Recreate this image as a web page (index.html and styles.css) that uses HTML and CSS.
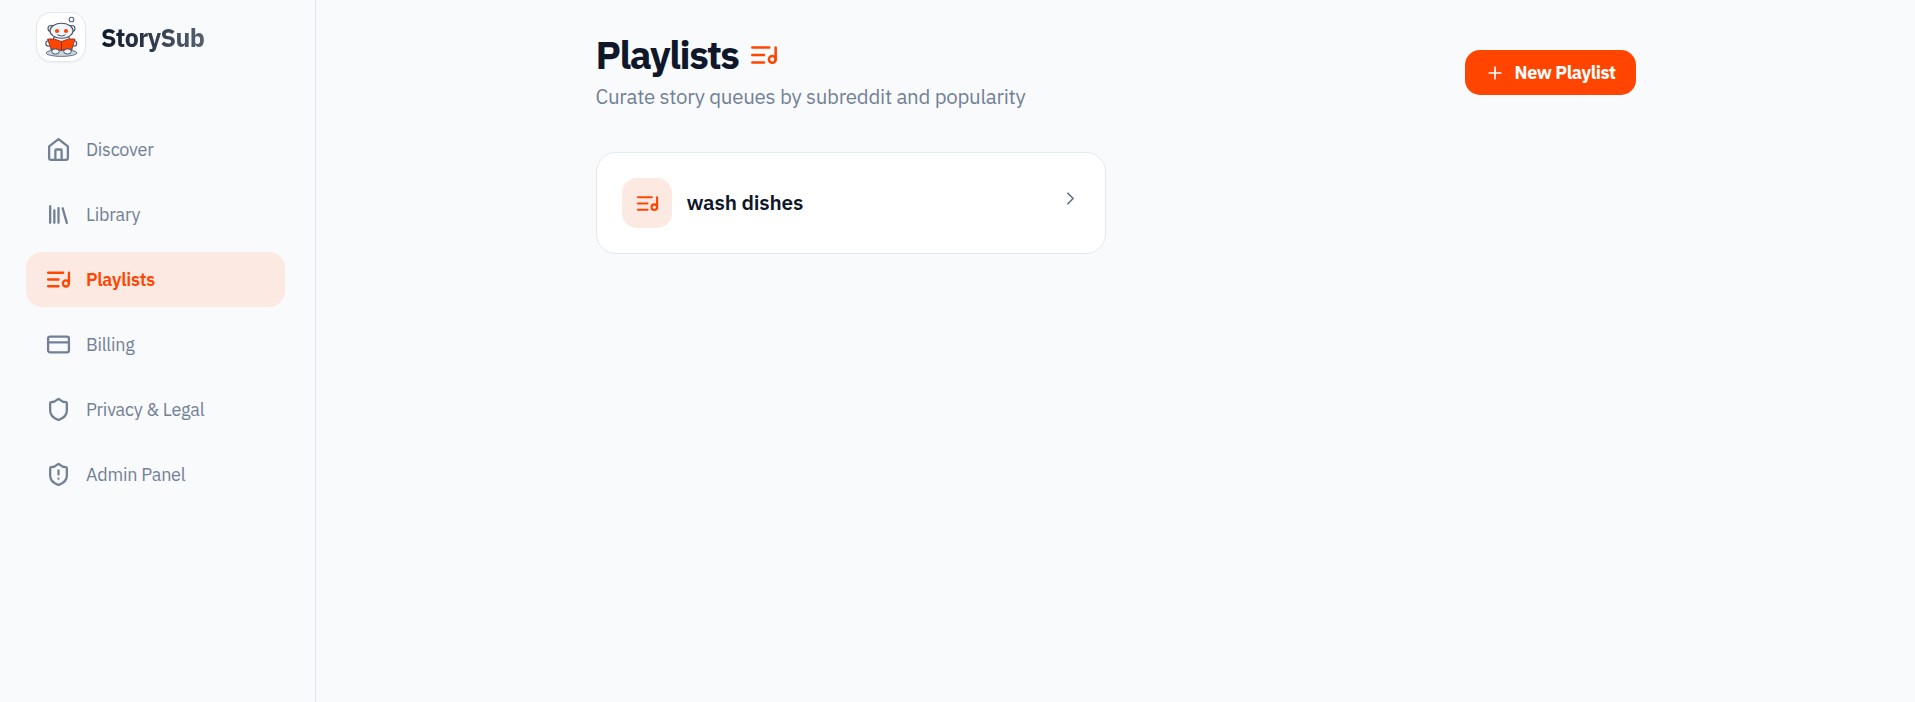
FILE: index.html
```html
<!DOCTYPE html>
<html lang="en">
<head>
    <meta charset="UTF-8">
    <meta name="viewport" content="width=device-width, initial-scale=1.0">
    <title>Playlists - StorySub</title>
    <link rel="stylesheet" href="styles.css">
</head>
<body>
    <!-- shared icon -->
    <svg class="sprite" width="0" height="0">
        <symbol id="icon-playlist" viewBox="0 0 24 24">
            <path d="M2 5.500h14.500M2 12h10M2 18.500h10M22 16V5.500"/>
            <circle cx="19.100" cy="15.800" r="2.900"/>
        </symbol>
    </svg>

    <div class="layout">
        <aside class="sidebar">
            <a class="brand" href="#">
                <span class="brand-logo">
                    <svg viewBox="0 0 48 48" width="48" height="48">
                        <ellipse cx="24.500" cy="40" rx="15.500" ry="3.400" fill="#cbd5e1" stroke="#64748b"/>
                        <circle cx="34.500" cy="6.500" r="2.300" fill="#fff" stroke="#53637d" stroke-width="1.100"/>
                        <g fill="#f1f5f9" stroke="#475569" stroke-width="1.100">
                            <circle cx="14" cy="15.500" r="3"/>
                            <circle cx="35" cy="15.500" r="3"/>
                            <path d="M17 24h15l3 13H14z"/>
                            <ellipse cx="24.500" cy="17.800" rx="11.500" ry="7.500"/>
                            <circle cx="11.500" cy="30.500" r="2.700"/>
                            <circle cx="37" cy="30.500" r="2.700"/>
                        </g>
                        <path d="M10.500 26q7-1 14 2.500Q31 25 38 26l-3 10q-6-1-10.500 1.500Q20 35 14 36z" fill="#ff4500" stroke="#7c3426" stroke-width=".8"/>
                        <path d="M24.500 28.500v9" stroke="#7c3426"/>
                        <circle cx="20" cy="18" r="2.100" fill="#ff4500"/>
                        <circle cx="29" cy="18" r="2.100" fill="#ff4500"/>
                        <path d="M20.500 21.800q4 2.500 8 0" fill="none" stroke="#334155" stroke-width=".9"/>
                        <g fill="#f1f5f9" stroke="#475569" stroke-width="1">
                            <ellipse cx="18.500" cy="38.500" rx="3.800" ry="2.600"/>
                            <ellipse cx="30.500" cy="38.500" rx="3.800" ry="2.600"/>
                        </g>
                    </svg>
                </span>
                <span class="brand-name">StorySub</span>
            </a>

            <nav class="nav">
                <a class="nav-item" href="#">
                    <svg class="icon" viewBox="0 0 24 24"><path d="m3 9 9-7 9 7v11a2 2 0 0 1-2 2H5a2 2 0 0 1-2-2zM9 22v-9a1 1 0 0 1 1-1h4a1 1 0 0 1 1 1v9"/></svg>
                    <span>Discover</span>
                </a>
                <a class="nav-item" href="#">
                    <svg class="icon" viewBox="0 0 24 24"><path d="m16 6 4 14M12 6v14M8 8v12M4 4v16"/></svg>
                    <span>Library</span>
                </a>
                <a class="nav-item active" href="#">
                    <svg class="icon"><use href="#icon-playlist"/></svg>
                    <span>Playlists</span>
                </a>
                <a class="nav-item" href="#">
                    <svg class="icon" viewBox="0 0 24 24"><rect x="2" y="4.500" width="20" height="15" rx="2"/><path d="M2 10h20"/></svg>
                    <span>Billing</span>
                </a>
                <a class="nav-item" href="#">
                    <svg class="icon" viewBox="0 0 24 24"><path d="M20 13c0 5-3.500 7.500-7.660 8.950a1 1 0 0 1-.67-.01C7.500 20.500 4 18 4 13V6a1 1 0 0 1 1-1c2 0 4.500-1.200 6.240-2.720a1.170 1.170 0 0 1 1.520 0C14.510 3.810 17 5 19 5a1 1 0 0 1 1 1z"/></svg>
                    <span>Privacy &amp; Legal</span>
                </a>
                <a class="nav-item" href="#">
                    <svg class="icon" viewBox="0 0 24 24"><path d="M20 13c0 5-3.500 7.500-7.660 8.950a1 1 0 0 1-.67-.01C7.500 20.500 4 18 4 13V6a1 1 0 0 1 1-1c2 0 4.500-1.200 6.240-2.720a1.170 1.170 0 0 1 1.520 0C14.510 3.810 17 5 19 5a1 1 0 0 1 1 1zM12 8v4M12 16h.01"/></svg>
                    <span>Admin Panel</span>
                </a>
            </nav>
        </aside>

        <main class="main">
            <div class="content">
                <header class="page-header">
                    <div>
                        <h1>Playlists <svg class="icon title-icon"><use href="#icon-playlist"/></svg></h1>
                        <p class="subtitle">Curate story queues by subreddit and popularity</p>
                    </div>
                    <button class="new-button">
                        <svg class="icon" viewBox="0 0 24 24"><path d="M5 12h14M12 5v14"/></svg>
                        <span>New Playlist</span>
                    </button>
                </header>

                <div class="cards">
                    <a class="card" href="#">
                        <span class="card-icon">
                            <svg class="icon"><use href="#icon-playlist"/></svg>
                        </span>
                        <span class="card-name">wash dishes</span>
                        <svg class="icon chevron" viewBox="0 0 24 24"><path d="m9 18 6-6-6-6"/></svg>
                    </a>
                </div>
            </div>
        </main>
    </div>
</body>
</html>
```

FILE: styles.css
```css
:root {
    --primary: #ff4500;
    --primary-soft: #fce9e2;
    --background: #f9fafc;
    --text: #0f172a;
    --muted: #718096;
    --border: #e2e8f0;
}

* {
    margin: 0;
    padding: 0;
    box-sizing: border-box;
}

body {
    font-family: "IBM Plex Sans", Roboto, sans-serif;
    letter-spacing: -0.012em;
    background: var(--background);
    color: var(--text);
}

a {
    color: inherit;
    text-decoration: none;
}

.sprite {
    display: none;
}

.layout {
    display: flex;
    height: 100vh;
}

.sidebar {
    width: 316px;
    flex-shrink: 0;
    border-right: 1px solid var(--border);
    padding: 12px 30px 0 26px;
}

.brand {
    display: flex;
    align-items: center;
    gap: 15px;
    height: 50px;
    padding-left: 10px;
    margin-bottom: 60px;
}

.brand-logo {
    display: flex;
    width: 50px;
    height: 50px;
    background: #fff;
    border: 1px solid var(--border);
    border-radius: 15px;
    box-shadow: 0 1px 2px rgba(15, 23, 42, 0.05);
}

.brand-name {
    font-size: 25px;
    font-weight: 700;
    line-height: 30px;
    letter-spacing: -0.025em;
    padding-top: 2px;
    background: linear-gradient(to right, #0f172a, #566072);
    background-clip: text;
    -webkit-background-clip: text;
    color: transparent;
}

.nav {
    display: flex;
    flex-direction: column;
    gap: 10px;
}

.nav-item {
    display: flex;
    align-items: center;
    gap: 15px;
    height: 55px;
    padding: 0 20px;
    border-radius: 16px;
    color: var(--muted);
    font-size: 18px;
    letter-spacing: -0.013em;
    white-space: nowrap;
}

.nav-item.active {
    background: var(--primary-soft);
    color: var(--primary);
    font-weight: 600;
}

.icon {
    width: 25px;
    height: 25px;
    flex-shrink: 0;
    fill: none;
    stroke: currentColor;
    stroke-width: 2.2;
    stroke-linecap: round;
    stroke-linejoin: round;
}

.main {
    flex: 1;
}

.content {
    width: 1040px;
    margin: 0 auto;
    padding-top: 32px;
}

.page-header {
    display: flex;
    justify-content: space-between;
    align-items: flex-start;
    height: 120px;
}

h1 {
    display: flex;
    align-items: center;
    gap: 12px;
    padding-top: 1px;
    font-size: 38.8px;
    font-weight: 700;
    line-height: 44px;
    letter-spacing: -0.038em;
}

.title-icon {
    width: 28px;
    height: 28px;
    color: var(--primary);
}

.subtitle {
    margin-top: 4px;
    color: var(--muted);
    font-size: 20.5px;
    line-height: 31px;
    letter-spacing: -0.013em;
    white-space: nowrap;
}

.new-button {
    display: flex;
    align-items: center;
    gap: 10px;
    width: 171px;
    height: 45px;
    margin-top: 18px;
    padding-left: 20px;
    border: none;
    border-radius: 15px;
    background: var(--primary);
    color: #fff;
    font: inherit;
    font-size: 18px;
    font-weight: 700;
    letter-spacing: -0.022em;
    white-space: nowrap;
    cursor: pointer;
}

.new-button .icon {
    width: 20px;
    height: 20px;
    stroke-width: 2;
}

.card {
    display: flex;
    align-items: center;
    width: 510px;
    height: 102px;
    padding: 0 24px 0 25px;
    background: #fff;
    border: 1px solid var(--border);
    border-radius: 20px;
}

.card-icon {
    display: flex;
    align-items: center;
    justify-content: center;
    width: 50px;
    height: 50px;
    padding-left: 1px;
    margin-right: 15px;
    border-radius: 15px;
    background: var(--primary-soft);
    color: var(--primary);
}

.card-icon .icon {
    width: 23px;
    height: 23px;
}

.card-name {
    flex: 1;
    padding-bottom: 2px;
    font-size: 20.8px;
    font-weight: 600;
}

.chevron {
    width: 21px;
    height: 21px;
    margin-bottom: 10px;
    color: #64748b;
    stroke-width: 2;
}
```
